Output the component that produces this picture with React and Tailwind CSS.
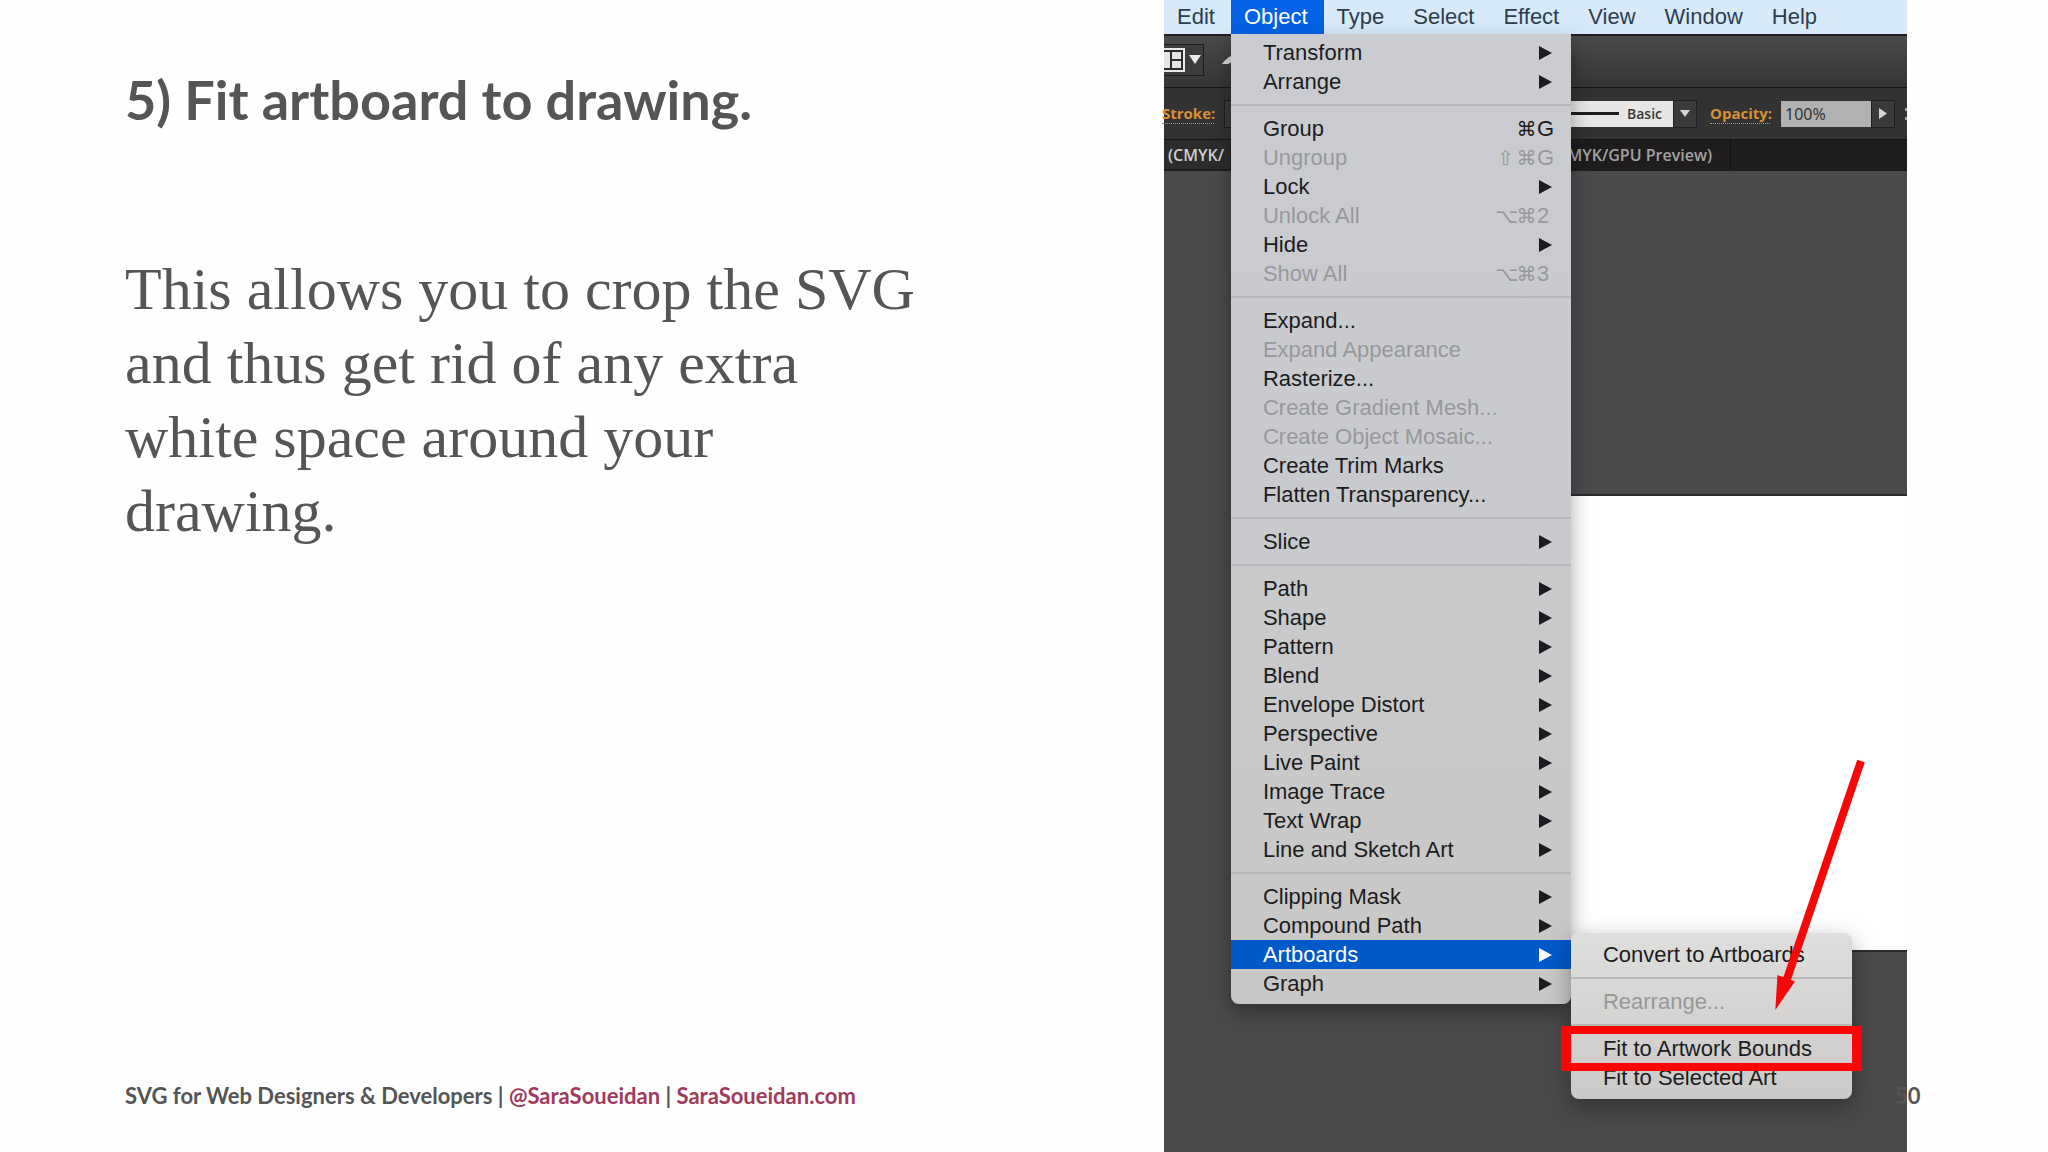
import React from "react";

const menuBar = ["Edit", "Object", "Type", "Select", "Effect", "View", "Window", "Help"];

const objectMenu = [
  [
    { label: "Transform", sub: true },
    { label: "Arrange", sub: true },
  ],
  [
    { label: "Group", mods: ["⌘"], letter: "G" },
    { label: "Ungroup", mods: ["⇧", "⌘"], letter: "G", disabled: true },
    { label: "Lock", sub: true },
    { label: "Unlock All", mods: ["⌥", "⌘"], letter: "2", disabled: true },
    { label: "Hide", sub: true },
    { label: "Show All", mods: ["⌥", "⌘"], letter: "3", disabled: true },
  ],
  [
    { label: "Expand..." },
    { label: "Expand Appearance", disabled: true },
    { label: "Rasterize..." },
    { label: "Create Gradient Mesh...", disabled: true },
    { label: "Create Object Mosaic...", disabled: true },
    { label: "Create Trim Marks" },
    { label: "Flatten Transparency..." },
  ],
  [{ label: "Slice", sub: true }],
  [
    { label: "Path", sub: true },
    { label: "Shape", sub: true },
    { label: "Pattern", sub: true },
    { label: "Blend", sub: true },
    { label: "Envelope Distort", sub: true },
    { label: "Perspective", sub: true },
    { label: "Live Paint", sub: true },
    { label: "Image Trace", sub: true },
    { label: "Text Wrap", sub: true },
    { label: "Line and Sketch Art", sub: true },
  ],
  [
    { label: "Clipping Mask", sub: true },
    { label: "Compound Path", sub: true },
    { label: "Artboards", sub: true, active: true },
    { label: "Graph", sub: true },
  ],
];

function Separator() {
  return (
    <li role="separator" className="h-[18px] flex items-center">
      <span className="w-full h-[2px] bg-[#b7b7b9]" />
    </li>
  );
}

function MenuItem({ item, children }) {
  const color = item.active
    ? "bg-[#0059c9] text-white"
    : item.disabled
      ? "text-[#97989b]"
      : "text-[#1b1c20]";

  return (
    <li className="relative">
      <button
        disabled={item.disabled}
        className={`w-full h-[29px] pl-8 pr-[17px] flex items-center justify-between text-left whitespace-nowrap ${color}`}
      >
        <span>{item.label}</span>
        {item.sub && (
          <svg viewBox="0 0 13 14" className="w-[13px] h-[14px] mr-[2px]" fill="currentColor">
            <path d="M0 0L13 7L0 14Z" />
          </svg>
        )}
        {item.mods && (
          <span className="flex items-center">
            {item.mods.map((mod) => (
              <span key={mod} className="w-[21px] text-center font-['DejaVu_Sans'] text-xl">
                {mod}
              </span>
            ))}
            <span className="w-[17px]">{item.letter}</span>
          </span>
        )}
      </button>
      {children}
    </li>
  );
}

function ArtboardsMenu() {
  return (
    <ul className="absolute left-full -top-[7px] w-[281px] py-[7px] rounded-lg bg-linear-to-b from-[#dededc] to-[#cbcac9] shadow-[0_8px_24px_rgba(0,0,0,0.35)]">
      <MenuItem item={{ label: "Convert to Artboards" }} />
      <Separator />
      <MenuItem item={{ label: "Rearrange...", disabled: true }} />
      <Separator />
      <MenuItem item={{ label: "Fit to Artwork Bounds" }}>
        {/* Highlight around the item */}
        <span className="absolute z-10 -inset-x-[10px] -inset-y-2 border-x-[10px] border-y-8 border-[#fb0505] pointer-events-none" />
      </MenuItem>
      <MenuItem item={{ label: "Fit to Selected Art" }} />

      {/* Pointer arrow */}
      <svg viewBox="0 0 110 260" className="absolute left-[194px] -top-[178px] w-[110px] h-[260px] pointer-events-none" aria-hidden="true">
        <path d="M96 6L22 224" stroke="#f60808" strokeWidth="8" />
        <path d="M12.500 220L30 226.500L10.300 255Z" fill="#f60808" />
      </svg>
    </ul>
  );
}

function ObjectMenu() {
  return (
    <ul className="absolute z-20 top-full left-0 w-[340px] pt-1 pb-[6px] rounded-b-lg bg-linear-to-b from-[#cbccd1] via-[#c9cacd] to-[#c9c8c6] text-[#1b1c20] shadow-[0_8px_20px_rgba(0,0,0,0.35)]">
      {objectMenu.map((group, i) => (
        <React.Fragment key={i}>
          {i > 0 && <Separator />}
          {group.map((item) => (
            <MenuItem key={item.label} item={item}>
              {item.active && <ArtboardsMenu />}
            </MenuItem>
          ))}
        </React.Fragment>
      ))}
    </ul>
  );
}

function Toolbars() {
  return (
    <div className="font-['Open_Sans',sans-serif] text-base leading-5">
      {/* Application bar */}
      <div className="h-[54px] pb-1 flex items-center bg-linear-to-b from-[#4a4a4a] to-[#353535] border-t-2 border-b border-t-[#1c1e22] border-b-[#141414]">
        <button aria-label="Arrange documents" className="h-8 w-10 flex items-center gap-1 border border-l-0 border-[#1c1c1c] bg-[#3c3c3c]">
          <svg viewBox="0 0 21 24" className="w-[21px] h-6">
            <path d="M0 1H20V23H0" fill="#2c2c2c" stroke="#e8e8e8" strokeWidth="2" />
            <path d="M0 4H6V20H0ZM8 4H17V11H8ZM8 13H17V20H8Z" fill="#e4e4e4" />
          </svg>
          <svg viewBox="0 0 12 9" className="w-3 h-[9px]">
            <path d="M0 0H12L6 9Z" fill="#ececec" />
          </svg>
        </button>
        <svg viewBox="0 0 12 10" className="w-3 h-[10px] ml-[18px]">
          <path d="M0 9C3 5 7 1 12 0V6L6 9Z" fill="#dcdcdc" />
        </svg>
      </div>

      {/* Control bar */}
      <div className="h-[51px] flex items-center bg-[#323232]">
        <a href="#stroke" className="-ml-[2px] w-[52px] text-[15px] font-bold text-[#d98f35] border-b border-dotted border-[#d98f35]">
          Stroke:
        </a>
        <span className="ml-[10px] w-10 h-7 border border-[#1f1f1f] bg-[#3a3a3a]" />
        <div className="ml-auto flex items-center">
          <label className="h-[26px] w-[140px] flex items-center justify-end gap-2 bg-[#e6e6e6] pr-2">
            <span className="w-20 h-[3px] bg-[#1c1c1c]" />
            <select aria-label="Brush definition" defaultValue="Basic" className="appearance-none w-[38px] text-sm font-semibold text-[#383838]">
              <option>Basic</option>
            </select>
          </label>
          <span className="w-6 h-7 flex items-center justify-center border border-[#1f1f1f] bg-[#3a3a3a]">
            <svg viewBox="0 0 10 7" className="w-[10px] h-[7px]">
              <path d="M0 0H10L5 7Z" fill="#d4d4d4" />
            </svg>
          </span>
          <label htmlFor="opacity" className="ml-[13px] w-[60px] text-[15px] font-bold text-[#d98f35] border-b border-dotted border-[#d98f35]">
            Opacity:
          </label>
          <input id="opacity" defaultValue="100%" className="ml-[11px] w-[90px] h-[26px] pl-1 bg-[#b1b1b1] text-[#2a2a2a]" />
          <button aria-label="Opacity slider" className="w-6 h-7 mr-[10px] flex items-center justify-center border border-[#1f1f1f] bg-[#3a3a3a]">
            <svg viewBox="0 0 8 11" className="w-2 h-[11px]">
              <path d="M0 0L8 5.500L0 11Z" fill="#d4d4d4" />
            </svg>
          </button>
          <span className="w-[2px] h-3 flex flex-col justify-between">
            <span className="h-[3px] bg-[#a8a8a8]" />
            <span className="h-[3px] bg-[#a8a8a8]" />
          </span>
        </div>
      </div>

      {/* Document tabs */}
      <div className="h-8 pb-[2px] flex items-center justify-between border-t border-[#161616] bg-[#1e1c1d] font-semibold text-[#a3a3a3]">
        <span className="h-full w-[66px] pl-1 flex items-center bg-[#2d2c2d] text-[#cfcfcf]">(CMYK/</span>
        <span className="flex-1 h-full mr-[176px] pr-[18px] flex items-center justify-end border-r border-[#0f0f0f]">
          (CMYK/GPU Preview)
        </span>
      </div>
    </div>
  );
}

function Illustrator() {
  return (
    <div className="relative flex flex-col bg-[#4b494c] font-['Liberation_Sans',Arial,sans-serif] text-[22px] leading-7">
      <nav className="h-[34px] flex bg-[#d8eaf9] text-[#2c3e4e]">
        {menuBar.map((name) => (
          <div key={name} className="relative">
            <button className={`h-full pl-[13px] pr-4 ${name === "Object" ? "bg-[#0562e6] text-white" : ""}`}>
              {name}
            </button>
            {name === "Object" && <ObjectMenu />}
          </div>
        ))}
      </nav>
      <Toolbars />
      {/* Artboard */}
      <div className="mt-[323px] ml-[380px] h-[458px] bg-white border-y-2 border-[#2c2a2c]" />
    </div>
  );
}

export default function App() {
  return (
    <div className="min-h-screen grid grid-cols-[1164fr_743fr_141fr] bg-[#fefefe] text-[#555555] font-['Lato',sans-serif]">
      <main className="flex flex-col pl-[125px] pt-16 pb-10">
        <h1 className="text-[54px] leading-[72px] font-bold">5) Fit artboard to drawing.</h1>
        <p className="mt-[116px] max-w-[830px] font-['Liberation_Serif',serif] text-[60px] leading-[74px]">
          This allows you to crop the SVG
          <br />
          and thus get rid of any extra
          <br />
          white space around your
          <br />
          drawing.
        </p>
        <footer className="mt-auto text-[22px] leading-8 font-bold whitespace-nowrap">
          SVG for Web Designers &amp; Developers |{" "}
          <a href="#twitter" className="text-[#a03a5c]">@SaraSoueidan</a> |{" "}
          <a href="#site" className="text-[#a03a5c]">SaraSoueidan.com</a>
        </footer>
      </main>

      <Illustrator />

      <aside className="flex items-end pb-10">
        <span className="relative -ml-3 text-[22px] leading-8 font-bold">50</span>
      </aside>
    </div>
  );
}
